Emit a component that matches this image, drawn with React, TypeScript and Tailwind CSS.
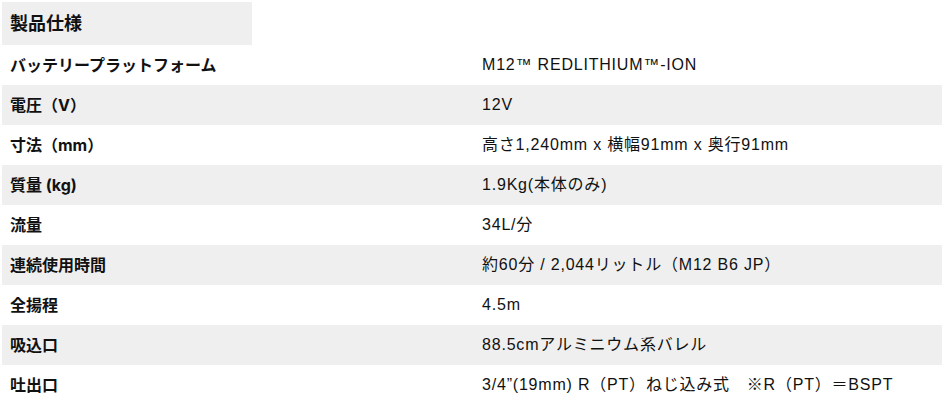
import React from 'react';

const specs: [string, string][] = [
  ['バッテリープラットフォーム', 'M12™ REDLITHIUM™-ION'],
  ['電圧（V）', '12V'],
  ['寸法（mm）', '高さ1,240mm x 横幅91mm x 奥行91mm'],
  ['質量 (kg)', '1.9Kg(本体のみ)'],
  ['流量', '34L/分'],
  ['連続使用時間', '約60分 / 2,044リットル（M12 B6 JP）'],
  ['全揚程', '4.5m'],
  ['吸込口', '88.5cmアルミニウム系バレル'],
  ['吐出口', '3/4”(19mm) R（PT）ねじ込み式　※R（PT）＝BSPT'],
];

export default function App() {
  return (
    <div
      className="bg-white p-[2px] text-[#111]"
      style={{ fontFamily: 'Inter, "Noto Sans CJK JP", sans-serif' }}
    >
      <div className="w-[250px] h-[43px] bg-[#efefef] flex items-center px-2">
        <h2 className="text-[18px] font-bold">製品仕様</h2>
      </div>
      <div className="w-[940px]">
        {specs.map(([label, value], i) => (
          <div
            key={label}
            className={`grid grid-cols-2 h-10 items-center ${i % 2 === 1 ? 'bg-[#efefef]' : 'bg-white'}`}
          >
            <div className="px-2 text-[16px] font-bold">{label}</div>
            <div
              className="px-[10px] text-[16px] tracking-[0.8px]"
              style={{ fontFamily: '"Liberation Sans", "Noto Sans CJK JP", sans-serif' }}
            >
              {value}
            </div>
          </div>
        ))}
      </div>
    </div>
  );
}
